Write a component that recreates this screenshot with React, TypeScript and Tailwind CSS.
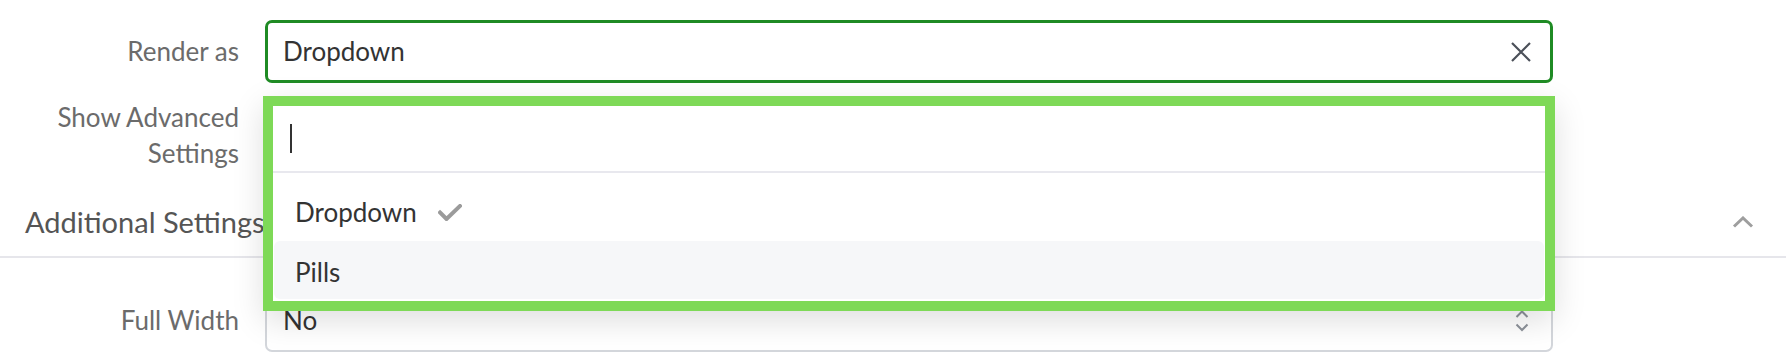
function CloseIcon() {
  return (
    <svg width="20" height="20" viewBox="0 0 20 20" fill="none">
      <path d="M1 1 L19 19 M19 1 L1 19" stroke="#4b5059" strokeWidth="2.2" />
    </svg>
  )
}

function CheckMark() {
  return (
    <svg width="24" height="17" viewBox="0 0 24 17" fill="none">
      <path d="M2 8.5 L8.5 15 L22 2" stroke="#9b9b9b" strokeWidth="4" strokeLinecap="square" />
    </svg>
  )
}

function ChevronUp() {
  return (
    <svg width="22" height="12" viewBox="0 0 22 12" fill="none">
      <path d="M2 10.5 L11 2 L20 10.5" stroke="#9e9e9e" strokeWidth="3" />
    </svg>
  )
}

function UpDown() {
  return (
    <svg width="14" height="22" viewBox="0 0 14 22" fill="none">
      <path d="M1.5 7 L7 1.5 L12.5 7" stroke="#8d929a" strokeWidth="2" />
      <path d="M1.5 14.5 L7 20 L12.5 14.5" stroke="#8d929a" strokeWidth="2" />
    </svg>
  )
}

export default function App() {
  return (
    <div className="relative w-[1786px] h-[362px] overflow-hidden bg-white font-['Lato',sans-serif] text-[26px]">
      {/* Render as */}
      <div className="flex items-center pt-[20px]">
        <div className="w-[239px] text-right text-[#6b6b6b]">Render as</div>
        <div className="ml-[26px] w-[1288px] h-[63px] flex items-center justify-between rounded-[7px] border-[3px] border-[#1f8b24] pl-[15px] pr-[19px] text-[#333]">
          <span>Dropdown</span>
          <CloseIcon />
        </div>
      </div>

      {/* Show advanced settings */}
      <div className="flex mt-[16px] h-[72px]">
        <div className="w-[239px] text-right text-[#6b6b6b] leading-[36px]">
          Show Advanced
          <br />
          Settings
        </div>
      </div>

      {/* Section header */}
      <div className="flex items-center justify-between pl-[25px] pr-[32px] pt-[31px] pb-[14px] border-b-2 border-[#e6e6eb]">
        <span className="text-[29px] leading-[40px] text-[#555]">Additional Settings</span>
        <ChevronUp />
      </div>

      {/* Full width */}
      <div className="flex items-center mt-[31px]">
        <div className="w-[239px] text-right text-[#6b6b6b]">Full Width</div>
        <div className="ml-[26px] w-[1288px] h-[63px] flex items-center justify-between rounded-[7px] border-2 border-[#d3d6db] pl-[16px] pr-[22px] text-[#333]">
          <span>No</span>
          <UpDown />
        </div>
      </div>

      {/* Open menu, outlined */}
      <div className="absolute top-[96px] left-[263px] w-[1292px] h-[215px] border-[10px] border-[#7ed957] bg-white shadow-[0_10px_30px_rgba(0,0,0,0.13)] flex flex-col">
        <div className="h-[67px] flex items-center pl-[17px] border-b-2 border-[#e8e8ee]">
          <div className="w-[2px] h-[29px] bg-[#333]" />
        </div>
        <div className="pt-[10px] px-[1px] flex flex-col">
          <div className="h-[58px] flex items-center gap-[21px] pl-[21px] text-[#333]">
            <span>Dropdown</span>
            <CheckMark />
          </div>
          <div className="h-[58px] flex items-center pl-[21px] pt-[4px] rounded-md bg-[#f6f7f9] text-[#333]">
            Pills
          </div>
        </div>
      </div>
    </div>
  )
}
